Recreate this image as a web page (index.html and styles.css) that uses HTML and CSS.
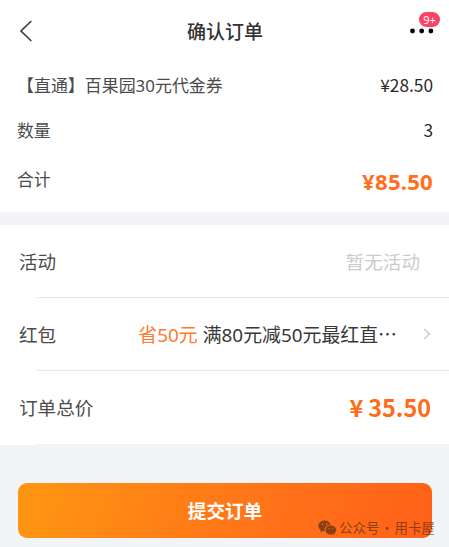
FILE: index.html
```html
<!DOCTYPE html>
<html lang="zh-CN">
<head>
<meta charset="utf-8">
<title>确认订单</title>
<link rel="stylesheet" href="styles.css">
</head>
<body>
<header class="topbar">
  <svg class="back" width="14" height="22" viewBox="0 0 14 22"><path d="M12.3 1 2 11 12.3 21" fill="none" stroke="#404040" stroke-width="1.7"/></svg>
  <h1 class="title">确认订单</h1>
  <div class="more">
    <svg class="dots" width="24" height="6" viewBox="0 0 24 6"><circle cx="2.5" cy="3" r="2.4"/><circle cx="11.7" cy="3" r="2.4"/><circle cx="20.9" cy="3" r="2.4"/></svg>
    <span class="badge">9+</span>
  </div>
</header>
<section class="summary">
  <div class="item item-name"><span class="name">【直通】百果园30元代金券</span><span class="value">¥28.50</span></div>
  <div class="item item-count"><span>数量</span><span class="value">3</span></div>
  <div class="item item-sum"><span>合计</span><span class="sum">¥85.50</span></div>
</section>
<section class="details">
  <div class="row"><span>活动</span><span class="none">暂无活动</span></div>
  <div class="row"><span>红包</span>
    <span class="coupon"><span class="save">省50元</span><span class="desc">满80元减50元最红直<span class="ellipsis">…</span></span></span>
    <svg class="next" width="8" height="12" viewBox="0 0 8 12"><path d="M1.2 1 6.5 6 1.2 11" fill="none" stroke="#c8c8c8" stroke-width="1.3"/></svg>
  </div>
  <div class="row"><span>订单总价</span><span class="total"><span class="yen">¥</span>35.50</span></div>
</section>
<footer class="footer">
  <button class="submit">提交订单</button>
  <div class="watermark">
    <svg width="19" height="16" viewBox="0 0 19 16"><path fill="currentColor" fill-rule="evenodd" d="M6.7.6C3 .6.4 2.9.4 6c0 1.700.9 3.200 2.300 4.200L2.200 12.200l2.200-1.200c.8.200 1.500.3 2.300.3-.9-3.700 2-6.700 5.900-6.600C12 2.300 9.700.6 6.700.6zM4.600 3.300a.8.8 0 1 1 0 1.600.8.800 0 0 1 0-1.600zM8.800 3.300a.8.800 0 1 1 0 1.600.8.800 0 0 1 0-1.600z"/><path fill="currentColor" fill-rule="evenodd" d="M12.900 5.500c-3.200 0-5.400 2-5.400 4.500s2.200 4.500 5.400 4.500c.6 0 1.200-.1 1.800-.3l1.900 1-.5-1.700c1.300-.8 2.100-2.100 2.100-3.500 0-2.500-2.200-4.500-5.300-4.500zM11.200 7.900a.7.700 0 1 1 0 1.400.7.700 0 0 1 0-1.400zM14.700 7.900a.7.700 0 1 1 0 1.400.7.700 0 0 1 0-1.400z"/></svg>
    <span class="kind">公众号</span><span class="dot">·</span><span>用卡屋</span>
  </div>
</footer>
</body>
</html>
```
FILE: styles.css
```css
* { box-sizing: border-box; }
body {
  margin: 0;
  width: 449px;
  height: 547px;
  overflow: hidden;
  background: #f3f4f7;
  color: #4b4b4b;
  font-family: "Noto Sans CJK SC", sans-serif;
  font-size: 18.6px;
  line-height: 1;
}
.topbar {
  display: flex;
  align-items: center;
  justify-content: space-between;
  height: 62px;
  padding: 0 13px 0 19px;
  background: #fff;
}
.back, .dots, .next { display: block; flex: none; }
.title {
  margin: -2px 0 0 7px;
  font-size: 19px;
  font-weight: 500;
  color: #333;
}
.more { position: relative; width: 26px; }
.badge {
  position: absolute;
  left: 9px;
  top: -16px;
  width: 21px;
  height: 15px;
  border-radius: 8px;
  background: #fb4164;
  color: #fff;
  font-family: "Noto Sans", sans-serif;
  font-size: 11px;
  line-height: 16px;
  text-align: center;
}
.summary {
  height: 150px;
  padding: 0 16px 0 17px;
  background: #fff;
  font-size: 16.8px;
}
.item { display: flex; align-items: center; justify-content: space-between; }
.item-name { height: 46px; }
.item-count { height: 44px; }
.item-sum { height: 54px; }
.name {
  margin-top: 2px;
  font-family: "Noto Sans", "Noto Sans CJK SC", sans-serif;
  font-size: 16.95px;
}
.value { font-size: 17.3px; color: #2b2b2b; }
.sum {
  margin-top: 6px;
  font-family: "Noto Sans", sans-serif;
  font-size: 22.2px;
  font-weight: 700;
  letter-spacing: .2px;
  color: #ff6f1c;
}
.details { margin-top: 13px; background: #fff; }
.row {
  position: relative;
  display: flex;
  align-items: center;
  justify-content: space-between;
  height: 73px;
  padding: 0 18px 1px 19px;
}
.row:last-child { height: 74px; }
.row::after {
  content: "";
  position: absolute;
  left: 37px;
  right: 0;
  bottom: 0;
  height: 1px;
  background: #e6e8ea;
}
.row:last-child::after { background: #f0f1f3; }
.none { margin-right: 11px; color: #cbcbcb; }
.coupon {
  display: flex;
  align-items: baseline;
  gap: 5px;
  margin-top: 2px;
  margin-left: auto;
  margin-right: 26px;
  font-family: "Noto Sans", "Noto Sans CJK SC", sans-serif;
  font-size: 18.9px;
  white-space: nowrap;
}
.ellipsis { font-family: "Noto Sans CJK SC", sans-serif; }
.save { color: #ff7a2c; }
.desc { color: #383838; }
.total { font-size: 23.4px; font-weight: 700; color: #ff6c18; }
.yen { margin-right: 5px; }
.footer { position: relative; padding: 38px 17px 0 18px; }
.submit {
  display: block;
  width: 100%;
  height: 55px;
  padding: 0 0 2px;
  border: 0;
  border-radius: 9px;
  background: linear-gradient(110deg, #ff9412 5%, #ff7519 55%, #ff6018 100%);
  color: #fff;
  font-family: inherit;
  font-size: 18.6px;
  font-weight: 700;
}
.watermark {
  position: absolute;
  left: 318px;
  top: 75px;
  display: flex;
  align-items: center;
  color: rgba(65, 35, 15, .62);
  font-size: 13.5px;
  white-space: nowrap;
}
.kind { margin-left: 2px; }
.dot { width: 15px; text-align: center; }
```
